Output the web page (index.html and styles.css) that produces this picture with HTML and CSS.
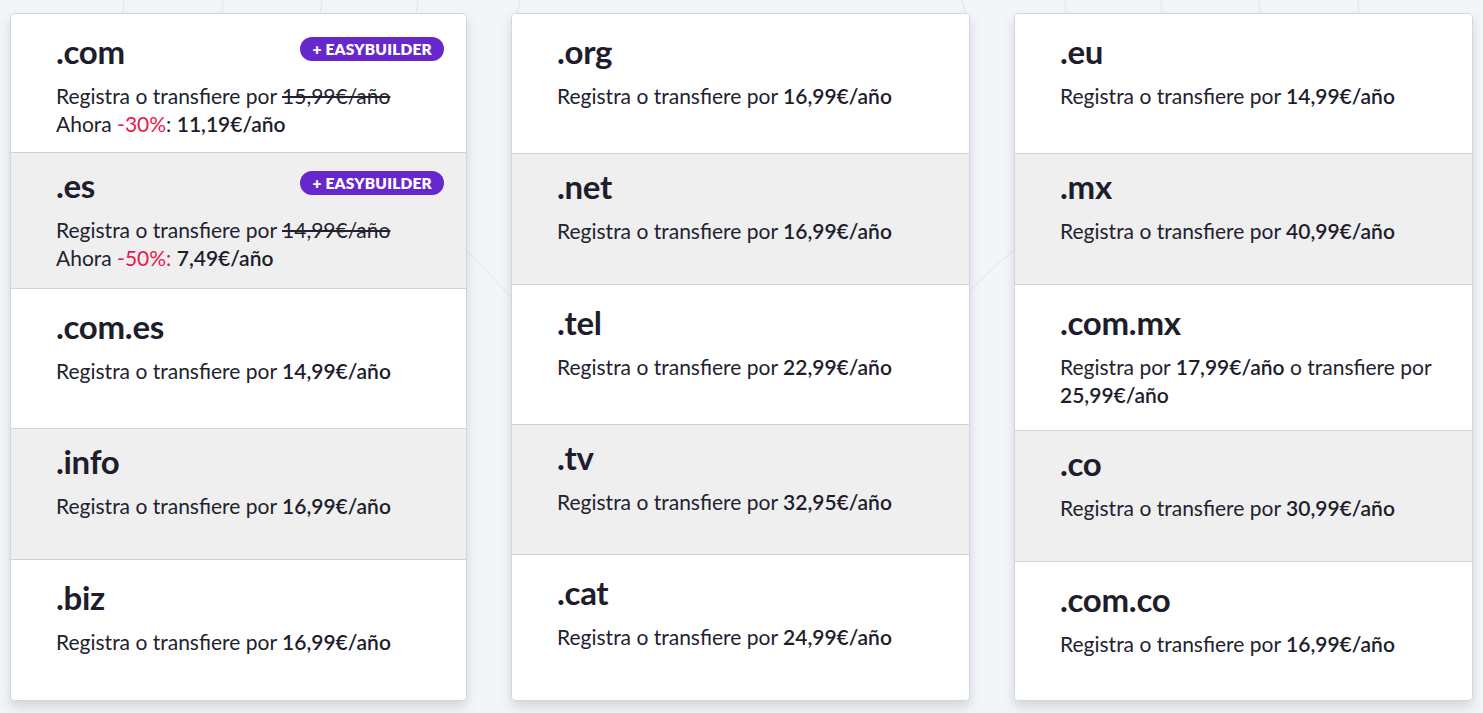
FILE: index.html
```html
<!DOCTYPE html>
<html lang="es">
<head>
<meta charset="utf-8">
<title>Dominios</title>
<link rel="stylesheet" href="styles.css">
</head>
<body>
<div class="page">
  <svg class="deco" width="1483" height="713" viewBox="0 0 1483 713" aria-hidden="true">
    <g stroke="#dfe5eb" stroke-width="1" fill="none">
      <path d="M124 0 L123 14"/>
      <path d="M223 0 L222 14"/>
      <path d="M322 0 L320 14"/>
      <path d="M418 0 L416 14"/>
      <path d="M520 0 L517 14"/>
      <path d="M962 0 L966 14"/>
      <path d="M1065 0 L1066 14"/>
      <path d="M1161 0 L1162 14"/>
      <path d="M1259 0 L1260 14"/>
      <path d="M1358 0 L1359 14"/>
      <path d="M466 250 Q490 275 512 298"/>
      <path d="M970 290 Q990 270 1014 250"/>
    </g>
  </svg>
  <main class="grid">
    <section class="card card--c1">
      <div class="row">
        <div class="row-head"><h3 class="tld">.com</h3><span class="badge">+ EASYBUILDER</span></div>
        <p class="desc">Registra o transfiere por <s>15,99€/año</s><br>Ahora <span class="off">-30%</span>: <b>11,19€/año</b></p>
      </div>
      <div class="row">
        <div class="row-head"><h3 class="tld">.es</h3><span class="badge">+ EASYBUILDER</span></div>
        <p class="desc">Registra o transfiere por <s>14,99€/año</s><br>Ahora <span class="off">-50%:</span> <b>7,49€/año</b></p>
      </div>
      <div class="row">
        <div class="row-head"><h3 class="tld">.com.es</h3></div>
        <p class="desc">Registra o transfiere por <b>14,99€/año</b></p>
      </div>
      <div class="row">
        <div class="row-head"><h3 class="tld">.info</h3></div>
        <p class="desc">Registra o transfiere por <b>16,99€/año</b></p>
      </div>
      <div class="row">
        <div class="row-head"><h3 class="tld">.biz</h3></div>
        <p class="desc">Registra o transfiere por <b>16,99€/año</b></p>
      </div>
    </section>

    <section class="card card--c2">
      <div class="row">
        <div class="row-head"><h3 class="tld">.org</h3></div>
        <p class="desc">Registra o transfiere por <b>16,99€/año</b></p>
      </div>
      <div class="row">
        <div class="row-head"><h3 class="tld">.net</h3></div>
        <p class="desc">Registra o transfiere por <b>16,99€/año</b></p>
      </div>
      <div class="row">
        <div class="row-head"><h3 class="tld">.tel</h3></div>
        <p class="desc">Registra o transfiere por <b>22,99€/año</b></p>
      </div>
      <div class="row">
        <div class="row-head"><h3 class="tld">.tv</h3></div>
        <p class="desc">Registra o transfiere por <b>32,95€/año</b></p>
      </div>
      <div class="row">
        <div class="row-head"><h3 class="tld">.cat</h3></div>
        <p class="desc">Registra o transfiere por <b>24,99€/año</b></p>
      </div>
    </section>

    <section class="card card--c3">
      <div class="row">
        <div class="row-head"><h3 class="tld">.eu</h3></div>
        <p class="desc">Registra o transfiere por <b>14,99€/año</b></p>
      </div>
      <div class="row">
        <div class="row-head"><h3 class="tld">.mx</h3></div>
        <p class="desc">Registra o transfiere por <b>40,99€/año</b></p>
      </div>
      <div class="row">
        <div class="row-head"><h3 class="tld">.com.mx</h3></div>
        <p class="desc">Registra por <b>17,99€/año</b> o transfiere por <b>25,99€/año</b></p>
      </div>
      <div class="row">
        <div class="row-head"><h3 class="tld">.co</h3></div>
        <p class="desc">Registra o transfiere por <b>30,99€/año</b></p>
      </div>
      <div class="row">
        <div class="row-head"><h3 class="tld">.com.co</h3></div>
        <p class="desc">Registra o transfiere por <b>16,99€/año</b></p>
      </div>
    </section>
  </main>
</div>
</body>
</html>
```

FILE: styles.css
```css
* { box-sizing: border-box; }

html, body {
  margin: 0;
  padding: 0;
  background: #f3f6f9;
  font-family: "Lato", "Inter", sans-serif;
  color: #22222f;
}

.page {
  position: relative;
  width: 1483px;
  height: 713px;
  overflow: hidden;
}

.deco {
  position: absolute;
  left: 0;
  top: 0;
  z-index: 0;
}

.grid {
  position: relative;
  z-index: 1;
  display: grid;
  grid-template-columns: 457px 459px 459px;
  column-gap: 44px;
  padding: 13px 0 0 10px;
}

.card {
  display: grid;
  height: 688px;
  background: #fff;
  border: 1px solid #d4d6d9;
  border-radius: 5px;
  overflow: hidden;
  box-shadow: 0 6px 12px rgba(40, 50, 70, 0.16);
}

.card--c1 { grid-template-rows: 138px 136px 140px 131px 1fr; }
.card--c2 { grid-template-rows: 139px 131px 140px 130px 1fr; }
.card--c3 { grid-template-rows: 139px 131px 146px 131px 1fr; }

.row {
  padding: 20px 22px 0 45px;
  background: #fff;
}

.row + .row {
  border-top: 1px solid #d3d3d3;
}

.row:nth-child(even) {
  background: #efefef;
  padding-top: 15px;
}

.row-head {
  display: flex;
  justify-content: space-between;
  align-items: flex-start;
}

.tld {
  margin: 0;
  font-size: 33px;
  line-height: 34px;
  font-weight: 700;
  color: #1d1d2c;
  letter-spacing: -0.3px;
}

.badge {
  margin-top: 3px;
  height: 24px;
  padding: 0 12px;
  border-radius: 12px;
  background: #6628cc;
  color: #fff;
  font-size: 15.5px;
  line-height: 24px;
  font-weight: 800;
  letter-spacing: 0.2px;
  white-space: nowrap;
}

.desc {
  margin: 14px 0 0;
  font-size: 21px;
  line-height: 28px;
  color: #22222f;
}

.desc b {
  font-weight: 600;
  color: #1d1d2c;
}

.desc s {
  text-decoration: line-through;
  text-decoration-thickness: 1.5px;
}

.off {
  color: #e8184c;
}
```
